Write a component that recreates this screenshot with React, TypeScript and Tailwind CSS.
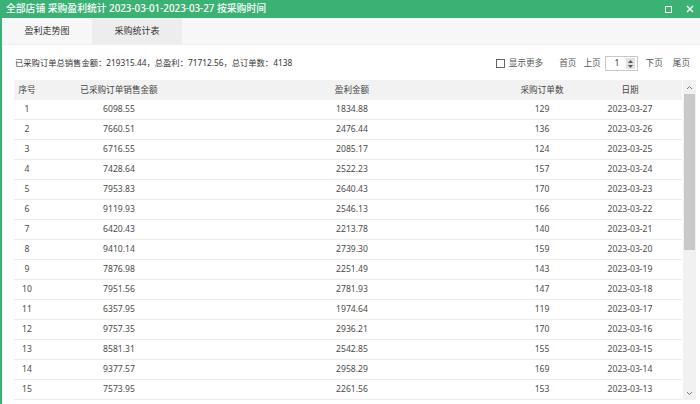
import React from "react";

const rows: [string, string, string, string][] = [
  ["6098.55", "1834.88", "129", "2023-03-27"],
  ["7660.51", "2476.44", "136", "2023-03-26"],
  ["6716.55", "2085.17", "124", "2023-03-25"],
  ["7428.64", "2522.23", "157", "2023-03-24"],
  ["7953.83", "2640.43", "170", "2023-03-23"],
  ["9119.93", "2546.13", "166", "2023-03-22"],
  ["6420.43", "2213.78", "140", "2023-03-21"],
  ["9410.14", "2739.30", "159", "2023-03-20"],
  ["7876.98", "2251.49", "143", "2023-03-19"],
  ["7951.56", "2781.93", "147", "2023-03-18"],
  ["6357.95", "1974.64", "119", "2023-03-17"],
  ["9757.35", "2936.21", "170", "2023-03-16"],
  ["8581.31", "2542.85", "155", "2023-03-15"],
  ["9377.57", "2958.29", "169", "2023-03-14"],
  ["7573.95", "2261.56", "153", "2023-03-13"],
];

const grid = "grid grid-cols-[26px_158px_308px_72px_104px]";

export default function App() {
  return (
    <div
      className="w-[700px] h-[404px] overflow-hidden bg-white flex flex-col border-l-2 border-[#3bb273]"
      style={{ fontFamily: '"Noto Sans", "Noto Sans CJK SC", sans-serif' }}
    >
      {/* Title bar */}
      <div className="h-[18px] bg-[#3bb273] flex items-center justify-between pl-[4px] pr-[6px] text-white shrink-0">
        <span className="text-[9.8px] font-medium leading-none">全部店铺 采购盈利统计 2023-03-01-2023-03-27 按采购时间</span>
        <div className="flex items-center gap-[14px]">
          <span className="w-[7px] h-[7px] border-[1.5px] border-white block" />
          <svg width="8" height="8" viewBox="0 0 8 8">
            <path d="M1 1L7 7M7 1L1 7" stroke="white" strokeWidth="1.4" />
          </svg>
        </div>
      </div>
      {/* Tabs */}
      <div className="h-[27px] bg-[#f7f7f7] flex shrink-0 border-b border-[#efefef]">
        <div className="w-[90px] flex items-center justify-center text-[9px] text-[#333]">盈利走势图</div>
        <div className="w-[90px] flex items-center justify-center text-[9px] text-[#333] bg-[#ededed]">采购统计表</div>
      </div>
      {/* Summary + pager */}
      <div className="h-[35px] flex items-center justify-between pl-[13px] pr-[10px] shrink-0">
        <span className="text-[8.3px] text-[#333] pt-[2px]">已采购订单总销售金额：219315.44，总盈利：71712.56，总订单数：4138</span>
        <div className="flex items-center text-[8.6px] text-[#555] pt-[2px]">
          <span className="w-[9px] h-[9px] border border-[#666] bg-white block" />
          <span className="ml-[4px]">显示更多</span>
          <span className="ml-[16px]">首页</span>
          <span className="ml-[7px]">上页</span>
          <div className="ml-[4px] w-[33px] h-[15px] border border-[#c8c8c8] flex items-center justify-between">
            <span className="pl-[9px] text-[#333]">1</span>
            <div className="w-[9px] h-[11px] mr-[2px] bg-[#e2e2e2] flex flex-col items-center justify-center gap-[2px]">
              <svg width="5" height="3" viewBox="0 0 5 3"><path d="M0 3L2.5 0L5 3Z" fill="#555" /></svg>
              <svg width="5" height="3" viewBox="0 0 5 3"><path d="M0 0L2.5 3L5 0Z" fill="#555" /></svg>
            </div>
          </div>
          <span className="ml-[8px]">下页</span>
          <span className="ml-[10px]">尾页</span>
        </div>
      </div>
      {/* Table */}
      <div className="flex pl-[12px] pr-[3px]">
        <div className="w-[668px] text-[8.6px]">
          <div className={`${grid} h-[20px] items-center bg-[#f2f2f2] text-[#444]`}>
            <div className="text-center">序号</div>
            <div className="text-center">已采购订单销售金额</div>
            <div className="text-center">盈利金额</div>
            <div className="text-center">采购订单数</div>
            <div className="text-center">日期</div>
          </div>
          {rows.map((r, i) => (
            <div key={i} className={`${grid} h-[20px] items-center border-b border-[#ebebeb] text-[#4a4a4a]`}>
              <div className="text-center">{i + 1}</div>
              <div className="text-center">{r[0]}</div>
              <div className="text-center">{r[1]}</div>
              <div className="text-center">{r[2]}</div>
              <div className="text-center">{r[3]}</div>
            </div>
          ))}
        </div>
        {/* Scrollbar */}
        <div className="w-[13px] ml-[1px] h-[320px] bg-[#f1f1f1] flex flex-col items-center">
          <div className="h-[14px] flex items-center justify-center">
            <svg width="7" height="5" viewBox="0 0 7 5"><path d="M1 4L3.5 1.5L6 4" stroke="#777" strokeWidth="1" fill="none" /></svg>
          </div>
          <div className="w-[11px] h-[156px] bg-[#c9c9c9]" />
          <div className="flex-1" />
          <div className="h-[14px] flex items-center justify-center">
            <svg width="7" height="5" viewBox="0 0 7 5"><path d="M1 1L3.5 3.5L6 1" stroke="#777" strokeWidth="1" fill="none" /></svg>
          </div>
        </div>
      </div>
    </div>
  );
}
